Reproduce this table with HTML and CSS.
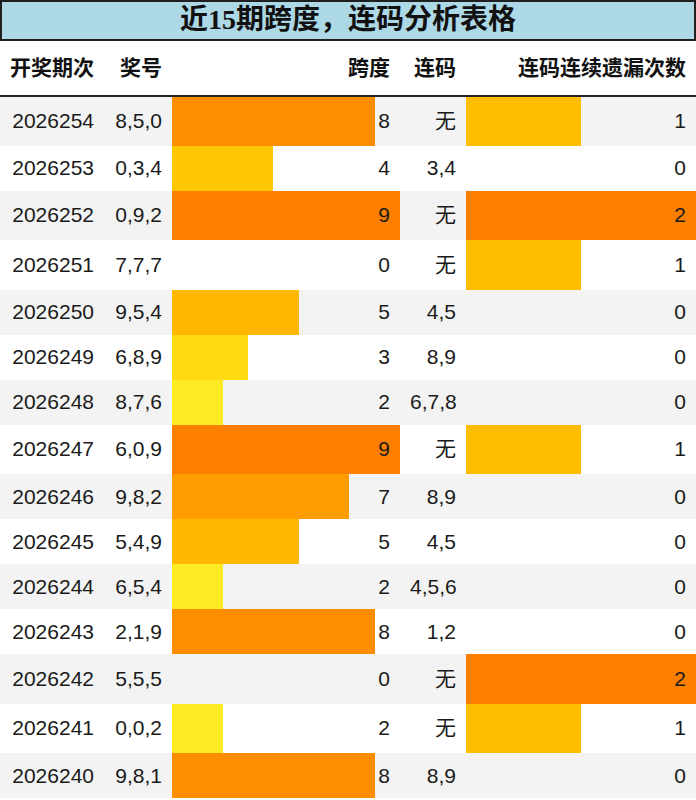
FILE: index.html
```html
<!DOCTYPE html>
<html lang="zh">
<head>
<meta charset="utf-8">
<title>近15期跨度，连码分析表格</title>
<link rel="stylesheet" href="styles.css">
</head>
<body>
<div class="title">近15期跨度，连码分析表格</div>
<table class="grid">
  <colgroup>
    <col class="c1"><col class="c2"><col class="c3"><col class="c4"><col class="c5">
  </colgroup>
  <thead>
    <tr><th>开奖期次</th><th>奖号</th><th>跨度</th><th>连码</th><th>连码连续遗漏次数</th></tr>
  </thead>
  <tbody>
    <tr class="tall"><td>2026254</td><td>8,5,0</td><td class="bar" style="--w:88.89%;--c:#fd8e00">8</td><td>无</td><td class="bar" style="--w:50%;--c:#ffbd00">1</td></tr>
    <tr><td>2026253</td><td>0,3,4</td><td class="bar" style="--w:44.44%;--c:#ffc706">4</td><td>3,4</td><td>0</td></tr>
    <tr class="tall"><td>2026252</td><td>0,9,2</td><td class="bar" style="--w:100%;--c:#fc7f00">9</td><td>无</td><td class="bar" style="--w:100%;--c:#fc7f00">2</td></tr>
    <tr class="tall"><td>2026251</td><td>7,7,7</td><td>0</td><td>无</td><td class="bar" style="--w:50%;--c:#ffbd00">1</td></tr>
    <tr><td>2026250</td><td>9,5,4</td><td class="bar" style="--w:55.56%;--c:#ffb700">5</td><td>4,5</td><td>0</td></tr>
    <tr><td>2026249</td><td>6,8,9</td><td class="bar" style="--w:33.33%;--c:#ffda11">3</td><td>8,9</td><td>0</td></tr>
    <tr><td>2026248</td><td>8,7,6</td><td class="bar" style="--w:22.22%;--c:#fceb25">2</td><td>6,7,8</td><td>0</td></tr>
    <tr class="tall"><td>2026247</td><td>6,0,9</td><td class="bar" style="--w:100%;--c:#fc7f00">9</td><td>无</td><td class="bar" style="--w:50%;--c:#ffbd00">1</td></tr>
    <tr><td>2026246</td><td>9,8,2</td><td class="bar" style="--w:77.78%;--c:#ff9c00">7</td><td>8,9</td><td>0</td></tr>
    <tr><td>2026245</td><td>5,4,9</td><td class="bar" style="--w:55.56%;--c:#ffb700">5</td><td>4,5</td><td>0</td></tr>
    <tr><td>2026244</td><td>6,5,4</td><td class="bar" style="--w:22.22%;--c:#fceb25">2</td><td>4,5,6</td><td>0</td></tr>
    <tr><td>2026243</td><td>2,1,9</td><td class="bar" style="--w:88.89%;--c:#fd8e00">8</td><td>1,2</td><td>0</td></tr>
    <tr class="tall"><td>2026242</td><td>5,5,5</td><td>0</td><td>无</td><td class="bar" style="--w:100%;--c:#fc7f00">2</td></tr>
    <tr class="tall"><td>2026241</td><td>0,0,2</td><td class="bar" style="--w:22.22%;--c:#fceb25">2</td><td>无</td><td class="bar" style="--w:50%;--c:#ffbd00">1</td></tr>
    <tr><td>2026240</td><td>9,8,1</td><td class="bar" style="--w:88.89%;--c:#fd8e00">8</td><td>8,9</td><td>0</td></tr>
  </tbody>
</table>
</body>
</html>
```

FILE: styles.css
```css
html, body {
  margin: 0;
  padding: 0;
  background: #ffffff;
}

body {
  width: 696px;
  font-family: "Liberation Sans", "Noto Sans CJK SC", sans-serif;
  color: #1a1a1a;
}

.title {
  box-sizing: border-box;
  height: 41px;
  background: #add8e6;
  border: 2px solid #1f1f1f;
  font-family: "Liberation Serif", "Noto Sans CJK SC", serif;
  font-weight: bold;
  font-size: 28px;
  line-height: 36px;
  text-align: center;
  color: #111;
}

.grid {
  width: 696px;
  table-layout: fixed;
  border-collapse: collapse;
  border-spacing: 0;
  font-size: 21px;
}

.c1 { width: 104px; }
.c2 { width: 68px; }
.c3 { width: 228px; }
.c4 { width: 66px; }
.c5 { width: 230px; }

.grid th,
.grid td {
  padding: 0 10px;
  text-align: right;
  vertical-align: middle;
  white-space: nowrap;
  line-height: 24px;
}

.grid thead th {
  height: 54px;
  font-weight: bold;
  border-bottom: 2px solid #222;
  color: #111;
}

.grid tbody tr {
  height: 45px;
}

.grid tbody tr.tall {
  height: 49.5px;
}

.grid tbody tr:nth-child(odd) {
  background: #f3f3f3;
}

.grid td.bar {
  background: linear-gradient(to right, var(--c) var(--w), transparent var(--w));
}
```
